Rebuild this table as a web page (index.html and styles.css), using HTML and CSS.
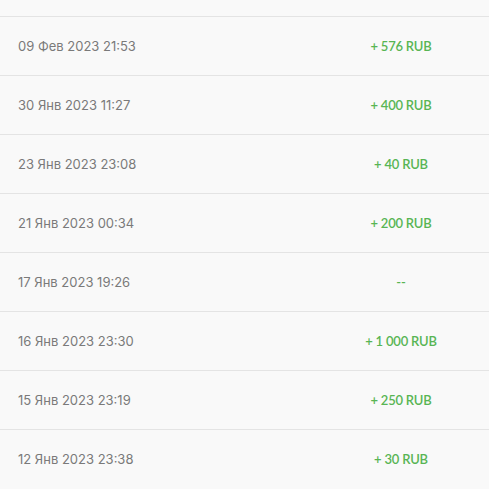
FILE: index.html
```html
<!DOCTYPE html>
<html lang="ru">
<head>
    <meta charset="UTF-8">
    <meta name="viewport" content="width=device-width, initial-scale=1.0">
    <title>История пополнений</title>
    <link rel="stylesheet" href="styles.css">
</head>
<body>
    <div class="history">
        <div class="history-row">
            <div class="history-date">09 Фев 2023 21:53</div>
            <div class="history-amount">+ 576 RUB</div>
        </div>
        <div class="history-row">
            <div class="history-date">30 Янв 2023 11:27</div>
            <div class="history-amount">+ 400 RUB</div>
        </div>
        <div class="history-row">
            <div class="history-date">23 Янв 2023 23:08</div>
            <div class="history-amount">+ 40 RUB</div>
        </div>
        <div class="history-row">
            <div class="history-date">21 Янв 2023 00:34</div>
            <div class="history-amount">+ 200 RUB</div>
        </div>
        <div class="history-row">
            <div class="history-date">17 Янв 2023 19:26</div>
            <div class="history-amount">--</div>
        </div>
        <div class="history-row">
            <div class="history-date">16 Янв 2023 23:30</div>
            <div class="history-amount">+ 1 000 RUB</div>
        </div>
        <div class="history-row">
            <div class="history-date">15 Янв 2023 23:19</div>
            <div class="history-amount">+ 250 RUB</div>
        </div>
        <div class="history-row">
            <div class="history-date">12 Янв 2023 23:38</div>
            <div class="history-amount">+ 30 RUB</div>
        </div>
    </div>
</body>
</html>
```

FILE: styles.css
```css
body {
    margin: 0;
    background: #f9f9f9;
    font-family: "Inter", sans-serif;
}
.history {
    padding-top: 16px;
}
.history-row {
    display: grid;
    grid-template-columns: 1fr 176px;
    align-items: center;
    height: 58px;
    padding-bottom: 1px;
    box-sizing: border-box;
    height: 59px;
    border-top: 1px solid #e4e4e4;
}
.history-date {
    padding-left: 18px;
    font-size: 13px;
    color: #7a7a7a;
}
.history-amount {
    text-align: center;
    font-family: "Lato", sans-serif;
    font-size: 13px;
    font-weight: 600;
    letter-spacing: -0.2px;
    color: #58b554;
}
```
